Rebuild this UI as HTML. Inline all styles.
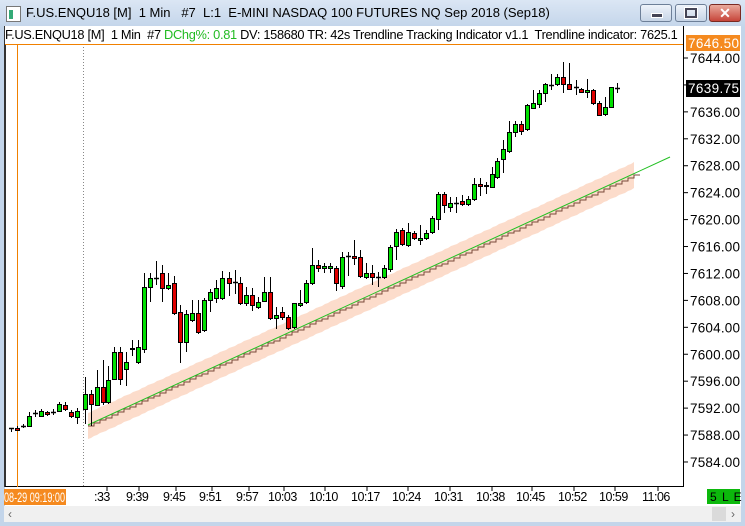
<!DOCTYPE html>
<html><head><meta charset="utf-8"><style>
html,body{margin:0;padding:0;width:745px;height:526px;overflow:hidden;background:#c9d9ec;font-family:"Liberation Sans",sans-serif}
#win{position:absolute;left:0;top:0;width:745px;height:526px;background:linear-gradient(#dbe6f4,#c3d5ea 28px,#c3d5ea)}
.t{position:absolute;left:26px;top:5px;font-size:13px;color:#000}
.ic{position:absolute;left:6px;top:6px;width:13px;height:14px;background:#fff;border:1px solid #777}
.ic:before{content:"";position:absolute;left:2px;top:3px;width:4px;height:9px;background:#3a7}
.btn{position:absolute;top:4px;width:30px;height:16px;border:1px solid #6d7f98;border-radius:3px;background:linear-gradient(#eef3fa,#c6d4e6)}
.cls{background:linear-gradient(#e9a99b,#c7453a);border-color:#7a2a22}
#hdr{position:absolute;left:5px;top:26px;width:678px;height:18px;background:#fff;border-bottom:1px solid #f08000;font-size:12.8px;line-height:18px;white-space:nowrap;overflow:hidden;letter-spacing:-0.3px}
</style></head><body><div id="win">
<div class="ic"></div>
<div class="t">F.US.ENQU18 [M]&nbsp; 1 Min &nbsp; #7&nbsp; L:1&nbsp; E-MINI NASDAQ 100 FUTURES NQ Sep 2018 (Sep18)</div>
<div class="btn" style="left:640px"><div style="position:absolute;left:10px;top:8px;width:10px;height:3px;background:#445;border:1px solid #fff"></div></div>
<div class="btn" style="left:675px"><div style="position:absolute;left:9px;top:3px;width:8px;height:6px;border:2px solid #445;outline:1px solid #fff"></div></div>
<div class="btn cls" style="left:709px;color:#fff;font-weight:bold;font-size:14px;text-align:center;line-height:16px">✕</div>
<svg style="position:absolute;left:0;top:0" width="745" height="526" id="s">
<rect x="5" y="26" width="736" height="480" fill="#fff"/>
<rect x="4" y="26" width="2" height="461" fill="#333"/>
<line x1="683.5" y1="26" x2="683.5" y2="487" stroke="#000"/>
<line x1="5" y1="486.5" x2="684" y2="486.5" stroke="#000"/>
<rect x="4" y="506" width="737" height="16" fill="#f0f0f0"/>
<rect x="712" y="507" width="14" height="14" fill="#dadada"/>
<text x="8" y="518" font-size="12" fill="#666">‹</text><text x="731" y="518" font-size="12" fill="#666">›</text>
<line x1="17.5" y1="44" x2="17.5" y2="487" stroke="#f08000"/>
<line x1="83.5" y1="44" x2="83.5" y2="487" stroke="#888" stroke-dasharray="1,2"/>
<g id="band"></g><g id="c"></g><g id="ax" font-size="13.5" fill="#000"></g>
<rect x="686" y="35" width="54" height="16" fill="#f58a1f"/>
<text x="688" y="48" font-size="13.5" fill="#fff" textLength="51">7646.50</text>
<rect x="686" y="80" width="54" height="17" fill="#000"/>
<text x="688" y="93" font-size="13.5" fill="#fff" textLength="51">7639.75</text>
<rect x="4" y="489" width="62" height="16" fill="#f58a1f"/>
<text x="4" y="502" font-size="14" fill="#fff" textLength="61" lengthAdjust="spacingAndGlyphs">08-29 09:19:00</text>
<rect x="707" y="489" width="33" height="15" fill="#0cb80c"/>
<text x="710" y="501" font-size="12" fill="#000" letter-spacing="1">5 L E</text>
<g id="tx" font-size="12.5" fill="#000" letter-spacing="-0.5"></g>
</svg>
<div id="hdr">F.US.ENQU18 [M]&nbsp; 1 Min &nbsp;#7 <span style="color:#22bb22">DChg%: 0.81</span> DV: 158680 TR: 42s Trendline Tracking Indicator v1.1&nbsp; Trendline indicator: 7625.1</div>
</div>
<script>
var NS="http://www.w3.org/2000/svg";
function el(p,t,a,txt){var e=document.createElementNS(NS,t);for(var k in a)e.setAttribute(k,a[k]);if(txt)e.textContent=txt;p.appendChild(e);return e;}
var ax=document.getElementById('ax');
for(var p=7644;p>=7584;p-=4){var y=58+(7644-p)*6.733;el(ax,'line',{x1:684,y1:y,x2:688,y2:y,stroke:'#000'});if(p!=7640)el(ax,'text',{x:690,y:y+5,textLength:50},p+'.00');}
var tx=document.getElementById('tx');
var tl=[[":33",94],["9:39",126],["9:45",163],["9:51",199],["9:57",236],["10:03",268],["10:10",309],["10:17",351],["10:24",392],["10:31",434],["10:38",476],["10:45",516],["10:52",558],["10:59",599],["11:06",642]];
tl.forEach(function(a){el(tx,'text',{x:a[1],y:501},a[0]);el(tx,'line',{x1:a[1]+(a[0].length>4?16:13),y1:487,x2:a[1]+(a[0].length>4?16:13),y2:491,stroke:'#000'});});
var b=document.getElementById('band');
var x0=88,y0=426,x1=635,y1=175;
var up="",dn="";
for(var x=x0;x<=x1;x+=3){var y=y0+(y1-y0)*(x-x0)/(x1-x0);up+=x+","+Math.round(y-13)+" ";dn=x+","+Math.round(y+13)+" "+dn;}
el(b,'polygon',{points:up+dn,fill:'#fcdccb'});
var st="M"+x0+","+y0;for(var x=x0;x<=x1;x+=6){var y=Math.round(y0+(y1-y0)*(x-x0)/(x1-x0));st+=" L"+x+","+y+" L"+(x+6)+","+y;}
el(b,'path',{d:st,stroke:'#7a4a3a',fill:'none','stroke-width':1});
el(b,'line',{x1:x0,y1:y0-1,x2:670,y2:157,stroke:'#22c022','stroke-width':1});
var C=[[11,428,428,428,432],[17,428,430,426,430],[23,426,426,424,428],[29,426,416,412,427],[35,413,413,410,417],[41,416,411,409,417],[47,412,414,411,416],[53,412,412,409,415],[59,411,404,402,412],[65,405,409,402,411],[71,412,416,410,418],[77,417,411,408,424],[85,409,394,377,424],[91,394,404,390,426],[97,405,387,370,406],[103,387,402,360,405],[108,402,380,366,404],[114,379,352,347,380],[120,352,379,347,385],[126,369,362,352,386],[132,348,349,340,356],[138,362,347,340,364],[144,349,287,273,353],[150,287,278,273,302],[156,278,278,261,285],[162,273,288,265,302],[168,288,285,273,290],[174,283,313,276,315],[180,312,342,305,363],[186,342,314,310,352],[192,320,313,300,322],[198,313,332,300,334],[204,330,300,298,332],[210,300,292,289,312],[216,298,288,280,303],[222,298,278,271,300],[229,278,283,272,296],[235,282,282,270,294],[240,283,303,277,305],[246,303,295,287,306],[252,295,305,288,311],[258,307,302,297,309],[264,301,292,277,302],[270,292,318,277,320],[276,318,315,307,329],[282,312,317,307,320],[288,317,328,315,330],[294,327,303,303,329],[300,305,303,290,307],[306,302,283,280,304],[312,283,265,248,285],[318,265,268,260,272],[324,268,266,263,273],[330,268,266,263,273],[336,268,283,266,291],[342,286,257,252,289],[348,256,256,252,276],[354,256,258,240,265],[360,257,276,250,278],[366,277,273,263,279],[372,273,277,265,285],[378,277,277,272,287],[384,277,268,265,279],[390,269,247,245,272],[396,246,232,229,260],[402,230,244,228,246],[408,245,232,223,247],[414,233,238,231,240],[420,240,238,225,245],[426,238,233,230,240],[432,232,218,216,234],[438,219,194,192,230],[444,194,205,192,213],[450,207,203,197,212],[456,203,203,197,213],[462,201,204,195,206],[468,204,199,196,206],[474,199,184,178,201],[480,184,186,178,196],[486,186,185,182,194],[492,187,174,167,188],[497,177,161,158,179],[503,159,149,140,173],[509,151,132,121,153],[515,132,124,121,137],[521,124,131,121,135],[527,129,105,104,131],[533,108,103,90,109],[539,104,93,90,108],[545,93,84,83,102],[551,85,85,74,90],[557,84,77,74,86],[563,77,84,62,93],[569,84,89,63,90],[576,87,87,80,95],[581,89,92,88,93],[587,92,90,79,98],[593,90,103,89,105],[599,103,115,101,116],[605,114,107,97,116],[611,107,87,87,108],[617,88,88,83,93]];
var g=document.getElementById('c');
C.forEach(function(d){var x=d[0],o=d[1],c=d[2];
el(g,'line',{x1:x+0.5,y1:d[3],x2:x+0.5,y2:d[4],stroke:'#000'});
var t=Math.min(o,c),h=Math.abs(o-c);
if(h<1){el(g,'line',{x1:x-2,y1:o+0.5,x2:x+3,y2:o+0.5,stroke:'#000','stroke-width':1.5});}
else el(g,'rect',{x:x-1.5,y:t+0.5,width:4,height:h,fill:c<o?'#00e000':'#e00000',stroke:'#000','stroke-width':1});});
</script>
</body></html>
